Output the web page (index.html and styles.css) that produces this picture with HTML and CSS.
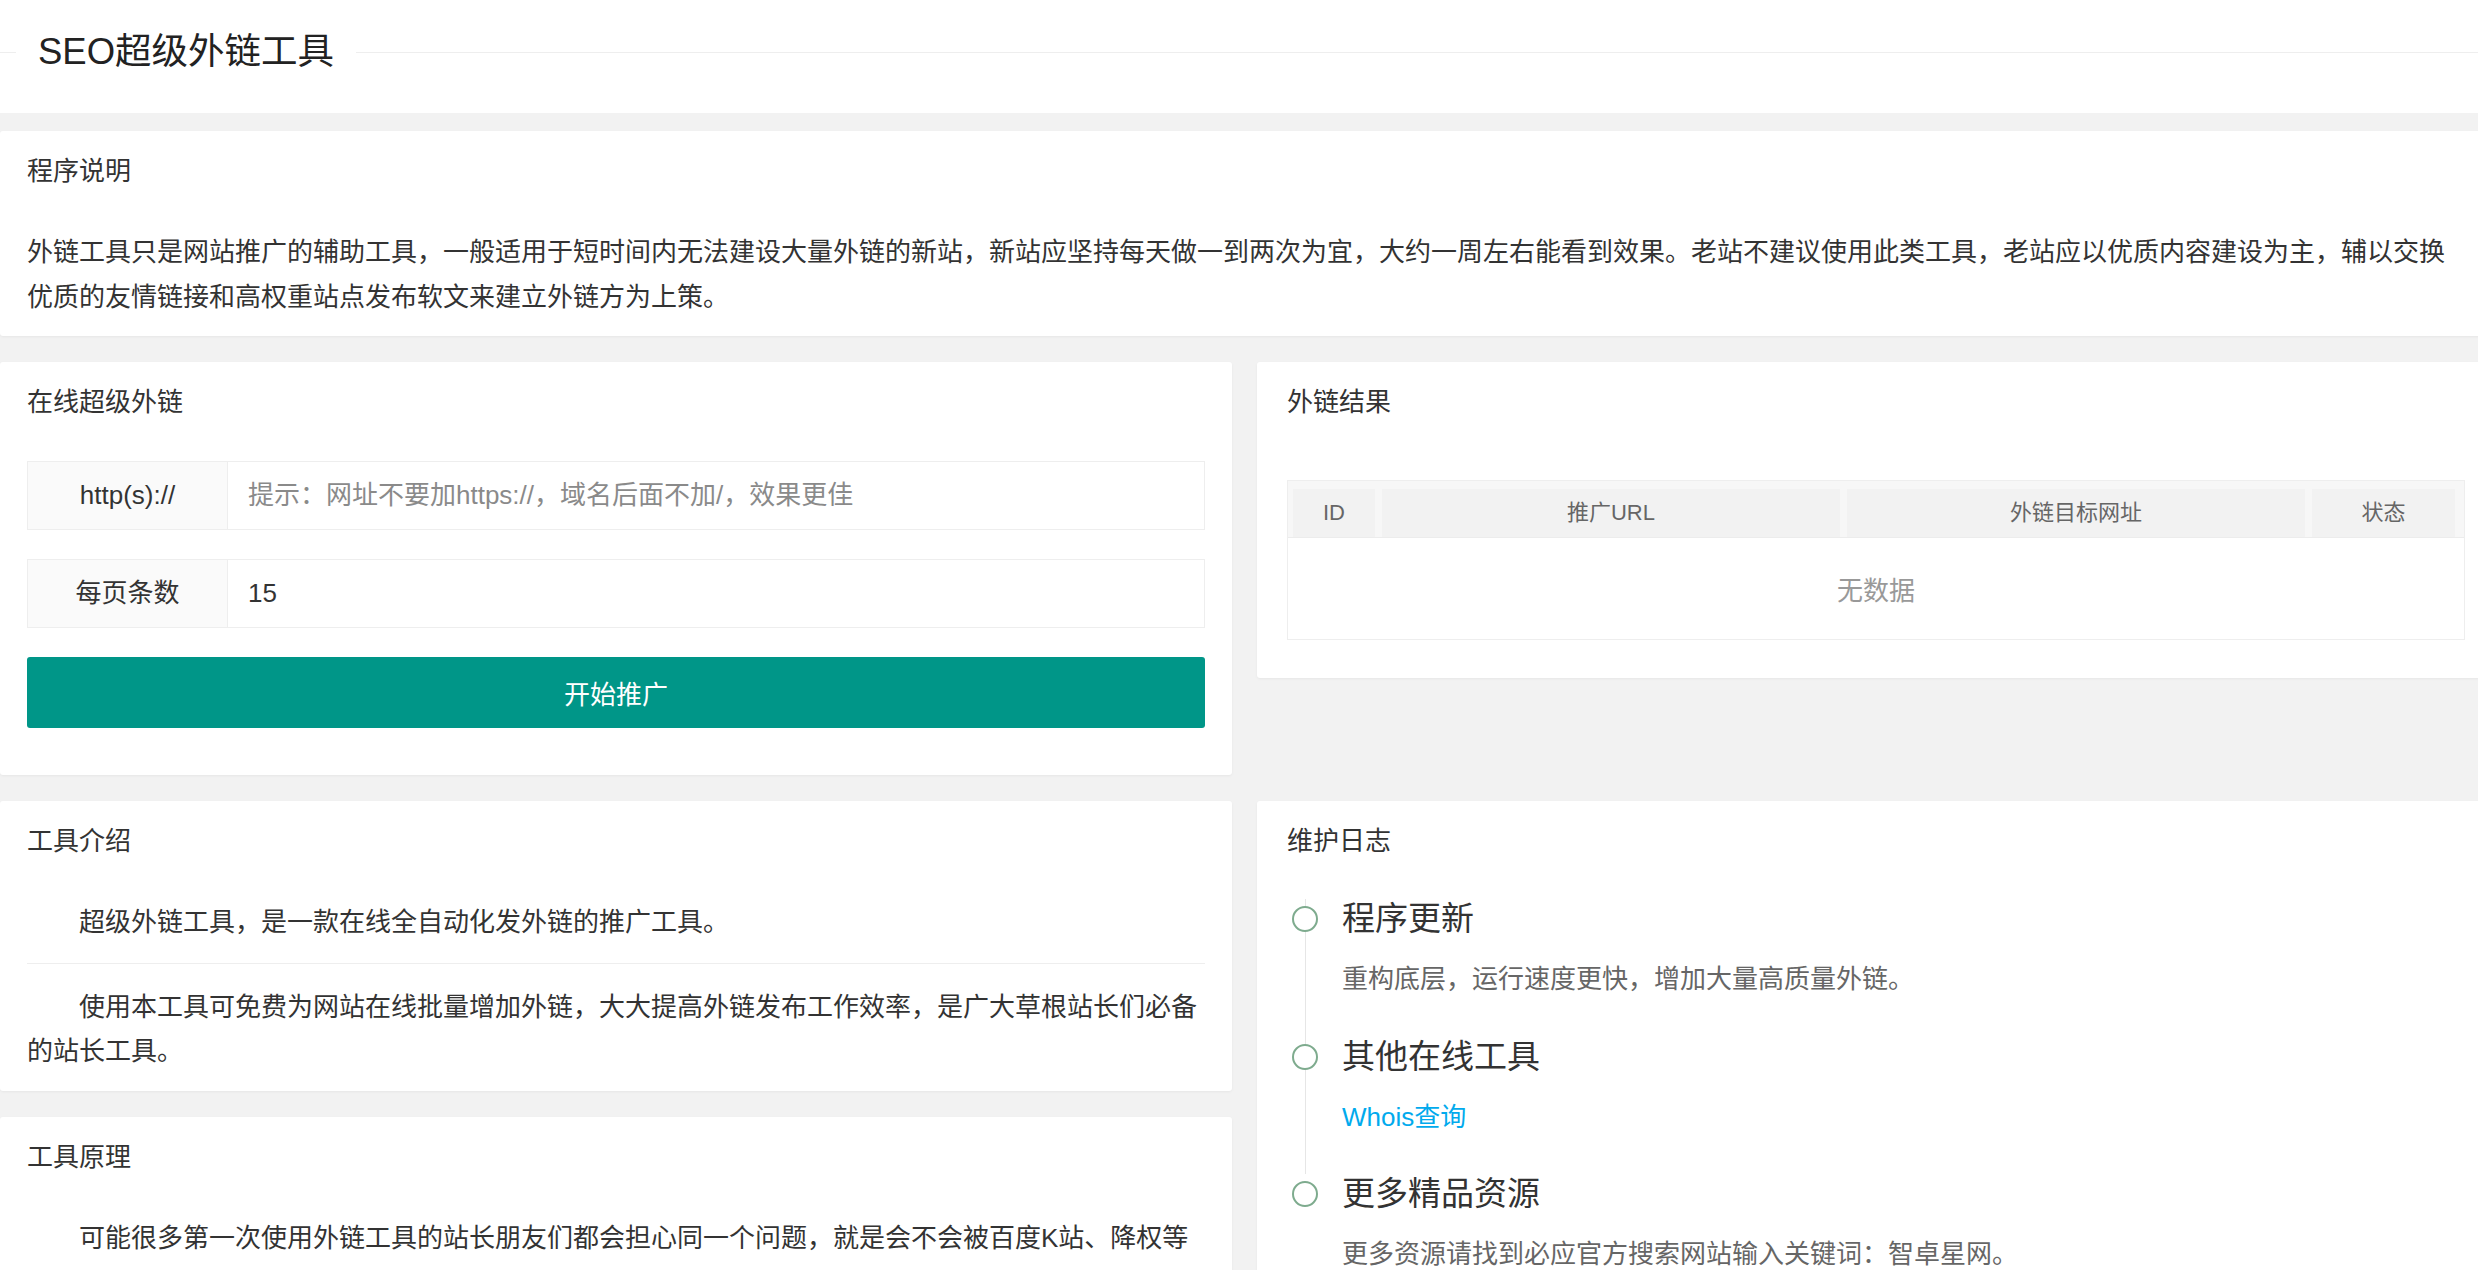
FILE: index.html
```html
<!DOCTYPE html>
<html lang="zh-CN">
<head>
<meta charset="utf-8">
<title>SEO超级外链工具</title>
<link rel="stylesheet" href="styles.css">
</head>
<body>
<header class="top">
  <div class="field-title"><h1>SEO超级外链工具</h1></div>
</header>
<main class="page">
  <section class="card">
    <div class="card-header">程序说明</div>
    <div class="card-body">
      <p class="text">外链工具只是网站推广的辅助工具，一般适用于短时间内无法建设大量外链的新站，新站应坚持每天做一到两次为宜，大约一周左右能看到效果。老站不建议使用此类工具，老站应以优质内容建设为主，辅以交换优质的友情链接和高权重站点发布软文来建立外链方为上策。</p>
    </div>
  </section>

  <div class="row">
    <div class="col">
      <section class="card">
        <div class="card-header">在线超级外链</div>
        <form class="card-body form">
          <div class="form-item">
            <label class="form-label">http(s)://</label>
            <input class="form-input" type="text" placeholder="提示：网址不要加https://，域名后面不加/，效果更佳">
          </div>
          <div class="form-item">
            <label class="form-label">每页条数</label>
            <input class="form-input" type="text" value="15">
          </div>
          <button class="btn" type="button">开始推广</button>
        </form>
      </section>
    </div>
    <div class="col col-right">
      <section class="card">
        <div class="card-header">外链结果</div>
        <div class="card-body">
          <div class="table">
            <div class="thead">
              <div class="th">ID</div>
              <div class="th">推广URL</div>
              <div class="th">外链目标网址</div>
              <div class="th">状态</div>
            </div>
            <div class="tbody"><span class="none">无数据</span></div>
          </div>
        </div>
      </section>
    </div>
  </div>

  <div class="row">
    <div class="col">
      <section class="card">
        <div class="card-header">工具介绍</div>
        <div class="card-body">
          <p class="text indent">超级外链工具，是一款在线全自动化发外链的推广工具。</p>
          <hr class="sep">
          <p class="text indent">使用本工具可免费为网站在线批量增加外链，大大提高外链发布工作效率，是广大草根站长们必备的站长工具。</p>
        </div>
      </section>
      <section class="card">
        <div class="card-header">工具原理</div>
        <div class="card-body principle">
          <p class="text indent">可能很多第一次使用外链工具的站长朋友们都会担心同一个问题，就是会不会被百度K站、降权等问题。其实大家完全不必担心，本工具是利用各大站长查询网站的缓存机制，为您的网站生成外链页面，搜索引擎蜘蛛抓取后即可形成有效外链。</p>
        </div>
      </section>
    </div>
    <div class="col col-right">
      <section class="card">
        <div class="card-header">维护日志</div>
        <div class="card-body">
          <ul class="timeline">
            <li class="tl-item">
              <span class="tl-axis"></span>
              <h3 class="tl-title">程序更新</h3>
              <p class="tl-desc">重构底层，运行速度更快，增加大量高质量外链。</p>
            </li>
            <li class="tl-item">
              <span class="tl-axis"></span>
              <h3 class="tl-title">其他在线工具</h3>
              <p class="tl-desc"><a class="link" href="#">Whois查询</a></p>
            </li>
            <li class="tl-item">
              <span class="tl-axis"></span>
              <h3 class="tl-title">更多精品资源</h3>
              <p class="tl-desc">更多资源请找到必应官方搜索网站输入关键词：智卓星网。</p>
            </li>
          </ul>
        </div>
      </section>
    </div>
  </div>
</main>
</body>
</html>
```

FILE: styles.css
```css
html {
  overflow-x: hidden;
  scrollbar-width: none;
}

body {
  margin: 0;
  background: #f2f2f2;
  font-family: "Liberation Sans", "Noto Sans CJK SC", sans-serif;
  font-size: 26px;
  color: #333;
  overflow-x: hidden;
}

/* ---------- top title bar ---------- */
.top {
  background: #fff;
  height: 113px;
  box-sizing: border-box;
  padding-top: 32px;
}

.field-title {
  display: flex;
  align-items: center;
}

.field-title::before {
  content: "";
  width: 16px;
  border-top: 1px solid #eee;
}

.field-title::after {
  content: "";
  flex: 1;
  border-top: 1px solid #eee;
}

.field-title h1 {
  margin: 0;
  padding: 0 22px;
  font-size: 36.5px;
  line-height: 40px;
  font-weight: normal;
  color: #222;
}

/* ---------- page layout ---------- */
.page {
  width: 2489px;
  padding-top: 18px;
  display: flex;
  flex-direction: column;
  gap: 26px;
}

.row {
  display: grid;
  grid-template-columns: 1232px 1232px;
  column-gap: 25px;
  align-items: start;
}

.col {
  display: flex;
  flex-direction: column;
  gap: 26px;
}

/* ---------- card ---------- */
.card {
  background: #fff;
  border-radius: 3px;
  box-shadow: 0 1px 3px 0 rgba(0, 0, 0, 0.05);
}

.card-header {
  height: 80px;
  line-height: 80px;
  padding: 0 27px;
  font-size: 26px;
  color: #333;
}

.card-body {
  padding: 19px 27px 17px;
}

.col-right .card-header {
  padding-left: 30px;
}

.col-right .card-body {
  padding-left: 30px;
  padding-right: 24px;
}

.text {
  margin: 0;
  line-height: 44.5px;
  color: #333;
}

.indent {
  text-indent: 2em;
}

.principle {
  padding-top: 17px;
}

.principle .text {
  line-height: 48px;
}

.sep {
  margin: 18px 0 21px;
  height: 1px;
  border: 0;
  background: #eee;
}

/* ---------- form ---------- */
.form {
  display: flex;
  flex-direction: column;
}

.form-item {
  display: flex;
  height: 69px;
  margin-bottom: 29px;
}

.form-label {
  width: 200px;
  flex: none;
  box-sizing: border-box;
  border: 1px solid #eee;
  border-right: 0;
  background: #fafafa;
  text-align: center;
  line-height: 67px;
  color: #333;
}

.form-input {
  flex: 1;
  min-width: 0;
  box-sizing: border-box;
  height: 69px;
  border: 1px solid #eee;
  padding: 0 20px;
  font-family: inherit;
  font-size: 26px;
  color: #333;
  background: #fff;
  outline: none;
}

.form-input::placeholder {
  color: #8a8a8a;
}

.btn {
  height: 71px;
  margin-bottom: 30px;
  border: 0;
  border-radius: 3px;
  background: #009688;
  color: #fff;
  font-family: inherit;
  font-size: 26px;
  cursor: pointer;
}

/* ---------- table ---------- */
.table {
  margin: 19px 0 21px;
  border: 1px solid #eee;
}

.thead {
  display: grid;
  grid-template-columns: 82px 458px 458px 143px;
  column-gap: 7px;
  height: 57px;
  box-sizing: border-box;
  padding: 8px 7px 0 5px;
  background: #f7f7f7;
  border-bottom: 1px solid #ececec;
}

.th {
  background: #f2f2f2;
  text-align: center;
  line-height: 48px;
  font-size: 22px;
  color: #666;
}

.tbody {
  height: 101px;
  display: flex;
  align-items: center;
  justify-content: center;
}

.none {
  font-size: 26px;
  color: #999;
}

/* ---------- timeline ---------- */
.timeline {
  list-style: none;
  margin: -1px 0 0;
  padding: 0;
}

.tl-item {
  position: relative;
  padding: 0 0 35.5px 55px;
}

.tl-item::before {
  content: "";
  position: absolute;
  left: 18px;
  top: 0;
  bottom: 0;
  width: 1px;
  background: #e6e6e6;
}

.tl-item:last-child::before {
  display: none;
}

.tl-axis {
  position: absolute;
  left: 5px;
  top: 7px;
  z-index: 1;
  width: 26px;
  height: 26px;
  box-sizing: border-box;
  border: 2px solid #7eab8e;
  border-radius: 50%;
  background: #fff;
}

.tl-title {
  margin: 0 0 18px;
  font-size: 33px;
  line-height: 40px;
  font-weight: normal;
  color: #333;
}

.tl-desc {
  margin: 0;
  font-size: 26px;
  line-height: 44px;
  color: #666;
}

.link {
  color: #01aaed;
  text-decoration: none;
}
```
